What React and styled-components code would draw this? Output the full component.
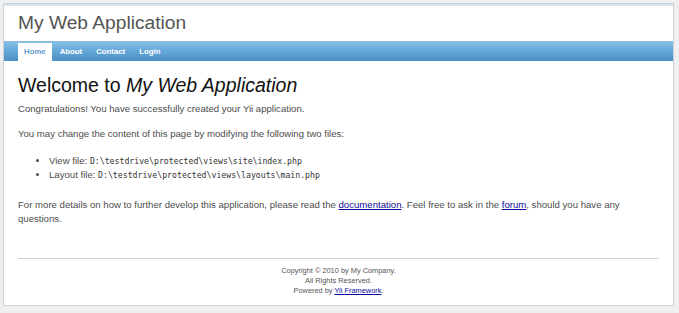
import React from 'react';
import styled, { createGlobalStyle } from 'styled-components';

const GlobalStyle = createGlobalStyle`
  html, body {
    margin: 0;
    padding: 0;
    background: #efefef;
  }
  body {
    font-family: "Liberation Sans", Arial, Helvetica, sans-serif;
    color: #4d4d4d;
  }
`;

const Page = styled.div`
  width: 671px;
  margin: 3px 0 0 3px;
  background: #fff;
  border: 1px solid #c8d2d9;
  min-height: 303px;
  box-sizing: border-box;
`;

const Header = styled.div`
  border-top: 2px solid #dbe3e9;
`;

const Logo = styled.div`
  padding: 5px 14px 7px;
  font-size: 19.2px;
  line-height: 23px;
  color: #555;
`;

const MainMenu = styled.nav`
  display: flex;
  gap: 2px;
  padding: 2px 14px 0;
  background: linear-gradient(to bottom, #9ab5c9 0, #86c1e7 1px, #68a9d9 45%, #4a8fc5 100%);
`;

const MenuLink = styled.a`
  display: block;
  padding: 0 6px;
  height: 18px;
  line-height: 18px;
  font-size: 7.8px;
  font-weight: bold;
  text-decoration: none;
  color: ${(p) => (p.$active ? '#6399cd' : '#fff')};
  background: ${(p) => (p.$active ? '#fff' : 'transparent')};
`;

const Content = styled.div`
  padding: 0 14px;
`;

const Title = styled.h1`
  margin: 12.5px 0 5px;
  font-size: 19.5px;
  line-height: 23.4px;
  font-weight: normal;
  color: #111;
`;

const Para = styled.p`
  margin: 0 0 10.6px;
  font-size: 9.6px;
  line-height: 14.4px;
`;

const FileList = styled.ul`
  margin: 12.6px 0 15.2px;
  padding-left: 31px;
  font-size: 9.6px;
  line-height: 14.4px;
`;

const Code = styled.code`
  font-family: "DejaVu Sans Mono", "Liberation Mono", monospace;
  font-size: 8.2px;
  color: #333;
`;

const Link = styled.a`
  color: #0a0a99;
  text-decoration: underline;
`;

const Footer = styled.div`
  margin: 31.7px 14px 0;
  padding: 6.3px 0 9px;
  border-top: 1px solid #ccd3d8;
  text-align: center;
  font-size: 7.4px;
  line-height: 10.2px;
  color: #555;
`;

const menu = [
  { label: 'Home', active: true },
  { label: 'About' },
  { label: 'Contact' },
  { label: 'Login' },
];

const App = () => (
  <>
    <GlobalStyle />
    <Page>
      <Header>
        <Logo>My Web Application</Logo>
      </Header>
      <MainMenu>
        {menu.map((m) => (
          <MenuLink key={m.label} href="#" $active={m.active}>
            {m.label}
          </MenuLink>
        ))}
      </MainMenu>
      <Content>
        <Title>
          Welcome to <i>My Web Application</i>
        </Title>
        <Para>Congratulations! You have successfully created your Yii application.</Para>
        <Para>You may change the content of this page by modifying the following two files:</Para>
        <FileList>
          <li>
            View file: <Code>D:\testdrive\protected\views\site\index.php</Code>
          </li>
          <li>
            Layout file: <Code>D:\testdrive\protected\views\layouts\main.php</Code>
          </li>
        </FileList>
        <Para>
          For more details on how to further develop this application, please read the{' '}
          <Link href="#">documentation</Link>. Feel free to ask in the <Link href="#">forum</Link>,
          should you have any questions.
        </Para>
      </Content>
      <Footer>
        Copyright &copy; 2010 by My Company.
        <br />
        All Rights Reserved.
        <br />
        Powered by <Link href="#">Yii Framework</Link>.
      </Footer>
    </Page>
  </>
);

export default App;
